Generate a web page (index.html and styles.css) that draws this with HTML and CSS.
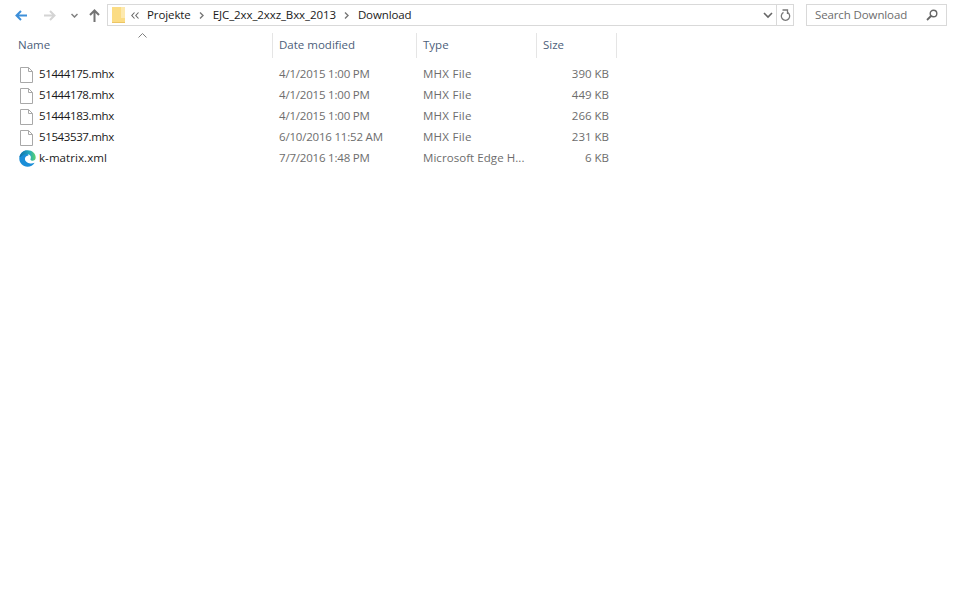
FILE: index.html
```html
<!DOCTYPE html>
<html lang="en">
<head>
<meta charset="utf-8">
<title>Download</title>
<link rel="stylesheet" href="styles.css">
</head>
<body>
<div class="toolbar">
  <div class="nav">
    <svg class="nav-icon" width="12" height="11" viewBox="0 0 12 11"><path d="M12 5.500H1.500M6 1 1.500 5.500 6 10" fill="none" stroke="#3d8fd9" stroke-width="2"/></svg>
    <svg class="nav-icon" width="12" height="11" viewBox="0 0 12 11"><path d="M0 5.500h10.500M6 1l4.500 4.500L6 10" fill="none" stroke="#d4d4d4" stroke-width="2"/></svg>
    <svg class="nav-icon" width="7" height="5" viewBox="0 0 7 5"><path d="M.5 1l3 3 3-3" fill="none" stroke="#808080" stroke-width="1.500"/></svg>
    <svg class="nav-icon" width="11" height="13" viewBox="0 0 11 13"><path d="M5.500 13V1.500M1 6l4.500-4.500L10 6" fill="none" stroke="#737373" stroke-width="2"/></svg>
  </div>
  <div class="address">
    <svg class="folder" width="13" height="16" viewBox="0 0 13 16"><path d="M0 0h9v11h4v5H0z" fill="#fbdc84"/><path d="M9 0h4v11H9z" fill="#fde9ae"/><path d="M0 15h13v1H0z" fill="#ecc564"/></svg>
    <svg class="chevrons" width="8" height="7" viewBox="0 0 8 7"><path d="M3.500.5.800 3.500l2.700 3M7.500.5 4.800 3.500l2.700 3" fill="none" stroke="#666" stroke-width="1.100"/></svg>
    <span class="crumb first">Projekte</span>
    <svg class="crumb-arrow" width="5" height="7" viewBox="0 0 5 7"><path d="M1 .5 4 3.500 1 6.500" fill="none" stroke="#777" stroke-width="1.400"/></svg>
    <span class="crumb">EJC_2xx_2xxz_Bxx_2013</span>
    <svg class="crumb-arrow" width="5" height="7" viewBox="0 0 5 7"><path d="M1 .5 4 3.500 1 6.500" fill="none" stroke="#777" stroke-width="1.400"/></svg>
    <span class="crumb">Download</span>
    <span class="spacer"></span>
    <svg class="addr-chev" width="10" height="7" viewBox="0 0 10 7"><path d="M1 1l4 4 4-4" fill="none" stroke="#666" stroke-width="1.600"/></svg>
    <span class="refresh">
      <svg width="11" height="13" viewBox="0 0 11 13"><path d="M7.500 3.400A4.200 4.200 0 1 1 3.500 3.400" fill="none" stroke="#777" stroke-width="1.300"/><path d="M2.500 1H7.500V5" fill="none" stroke="#777" stroke-width="1.300"/></svg>
    </span>
  </div>
  <div class="search">
    <span>Search Download</span>
    <svg width="12" height="12" viewBox="0 0 12 12"><circle cx="7.500" cy="4.500" r="3.300" fill="none" stroke="#666" stroke-width="1.400"/><path d="M5 7 1 11" stroke="#666" stroke-width="1.800"/></svg>
  </div>
</div>
<div class="list">
  <div class="row head">
    <div class="c name"><span class="head-label">Name</span><svg class="sort" width="9" height="5" viewBox="0 0 9 5"><path d="M.5 4.500l4-4 4 4" fill="none" stroke="#808080"/></svg></div>
    <div class="c date">Date modified</div>
    <div class="c type">Type</div>
    <div class="c size">Size</div>
  </div>
  <div class="rows">
    <div class="row item">
      <div class="c name"><svg class="doc" width="13" height="16" viewBox="0 0 13 16"><path d="M.5.500h8l4 4v11H.500z" fill="#fff" stroke="#a8a8a8"/><path d="M8.500.500v4h4" fill="none" stroke="#a8a8a8"/></svg><span class="fname">51444175.mhx</span></div>
      <div class="c date">4/1/2015 1:00 PM</div><div class="c type">MHX File</div><div class="c size">390 KB</div>
    </div>
    <div class="row item">
      <div class="c name"><svg class="doc" width="13" height="16" viewBox="0 0 13 16"><path d="M.5.500h8l4 4v11H.500z" fill="#fff" stroke="#a8a8a8"/><path d="M8.500.500v4h4" fill="none" stroke="#a8a8a8"/></svg><span class="fname">51444178.mhx</span></div>
      <div class="c date">4/1/2015 1:00 PM</div><div class="c type">MHX File</div><div class="c size">449 KB</div>
    </div>
    <div class="row item">
      <div class="c name"><svg class="doc" width="13" height="16" viewBox="0 0 13 16"><path d="M.5.500h8l4 4v11H.500z" fill="#fff" stroke="#a8a8a8"/><path d="M8.500.500v4h4" fill="none" stroke="#a8a8a8"/></svg><span class="fname">51444183.mhx</span></div>
      <div class="c date">4/1/2015 1:00 PM</div><div class="c type">MHX File</div><div class="c size">266 KB</div>
    </div>
    <div class="row item">
      <div class="c name"><svg class="doc" width="13" height="16" viewBox="0 0 13 16"><path d="M.5.500h8l4 4v11H.500z" fill="#fff" stroke="#a8a8a8"/><path d="M8.500.500v4h4" fill="none" stroke="#a8a8a8"/></svg><span class="fname">51543537.mhx</span></div>
      <div class="c date">6/10/2016 11:52 AM</div><div class="c type">MHX File</div><div class="c size">231 KB</div>
    </div>
    <div class="row item">
      <div class="c name"><svg class="edge" width="17" height="17" viewBox="0 0 17 17"><defs><linearGradient id="edge-wave" x1="0" y1="0" x2="1" y2="0"><stop offset="0" stop-color="#0e6fa8"/><stop offset=".6" stop-color="#22a8c0"/><stop offset="1" stop-color="#5ed46a"/></linearGradient></defs><path d="M7 .4C3 1 .3 4.500.3 8.500c0 4.500 3.600 8.200 8.200 8.200 3 0 5.600-1.500 7.100-4-1.500.8-3.500 1.100-5.300.6C7.500 12.500 5.500 10.500 6 8.200 6.400 6.300 8 5.500 9.500 5.500z" fill="#1a8ed8"/><path d="M.5 7C1.500 3 4.800.300 8.800.300c4.500 0 7.900 3.500 7.900 7.200 0 2.300-1.800 3.400-3.600 3.200-1.300-.1-2-.9-1.500-1.900.5-1.100.4-2.500-.7-3.500C9.500 4 6 3.800 3.500 5.500 2 6.500 1 7 .5 7z" fill="url(#edge-wave)"/></svg><span class="fname xml">k-matrix.xml</span></div>
      <div class="c date">7/7/2016 1:48 PM</div><div class="c type wide">Microsoft Edge H...</div><div class="c size">6 KB</div>
    </div>
  </div>
</div>
</body>
</html>
```
FILE: styles.css
```css
html, body { margin: 0; padding: 0; background: #fff; }
body {
  width: 960px;
  height: 603px;
  overflow: hidden;
  font-family: "Open Sans", "Noto Sans", sans-serif;
  font-size: 11.5px;
  color: #1a1a1a;
}
.toolbar {
  display: flex;
  align-items: center;
  height: 22px;
  padding-top: 4px;
  padding-bottom: 7px;
}
.nav {
  display: flex;
  align-items: center;
  width: 107px;
  height: 22px;
  flex: none;
}
.nav-icon { flex: none; }
.nav-icon:nth-child(1) { margin-left: 15px; }
.nav-icon:nth-child(2) { margin-left: 17px; }
.nav-icon:nth-child(3) { margin-left: 15px; }
.nav-icon:nth-child(4) { margin-left: 11px; }
.address {
  display: flex;
  align-items: center;
  flex: none;
  box-sizing: border-box;
  width: 687px;
  height: 22px;
  border: 1px solid #d9d9d9;
  padding-left: 4px;
}
.folder { flex: none; }
.chevrons { flex: none; margin-left: 6px; }
.crumb { margin-left: 9px; padding-bottom: 2px; letter-spacing: -0.1px; }
.crumb.first { margin-left: 8px; }
.crumb-arrow { margin-left: 8px; flex: none; }
.spacer { flex: 1; }
.addr-chev { flex: none; margin-right: 3px; }
.refresh {
  display: flex;
  align-items: center;
  justify-content: center;
  width: 16px;
  height: 20px;
  border-left: 1px solid #d9d9d9;
}
.search {
  display: flex;
  align-items: center;
  justify-content: space-between;
  box-sizing: border-box;
  width: 141px;
  height: 22px;
  margin-left: 12px;
  border: 1px solid #d9d9d9;
  padding: 0 8px 0 8px;
  color: #6d6d6d;
}
.search span { padding-bottom: 2px; letter-spacing: -0.12px; }
.row { display: flex; align-items: center; }
.head { height: 25px; color: #4c607a; }
.c { box-sizing: border-box; flex: none; white-space: nowrap; overflow: hidden; }
.name { width: 272px; padding-left: 18px; display: flex; align-items: center; }
.date { width: 144px; padding-left: 7px; }
.type { width: 120px; padding-left: 7px; }
.size { width: 81px; padding-left: 7px; }
.head .c { height: 25px; line-height: 24px; }
.head .date, .head .type, .head .size { border-left: 1px solid #e5e5e5; padding-left: 6px; }
.head .size { border-right: 1px solid #e5e5e5; }
.head .name { position: relative; align-items: flex-start; }
.sort { position: absolute; left: 138px; top: 0; }
.rows { padding-top: 6px; }
.item { height: 21px; }
.item .c { padding-bottom: 2px; }
.item .name { padding-left: 20px; padding-bottom: 0; }
.item .date { color: #6d6d6d; letter-spacing: -0.2px; }
.item .type { color: #6d6d6d; letter-spacing: 0.25px; }
.item .type.wide { letter-spacing: 0.06px; }
.item .size { color: #6d6d6d; text-align: right; padding-right: 8px; }
.fname { padding-bottom: 2px; letter-spacing: -0.38px; }
.fname.xml { letter-spacing: 0.07px; }
.doc { flex: none; margin-right: 6px; }
.edge { flex: none; margin-left: -1px; margin-right: 3px; }
```
